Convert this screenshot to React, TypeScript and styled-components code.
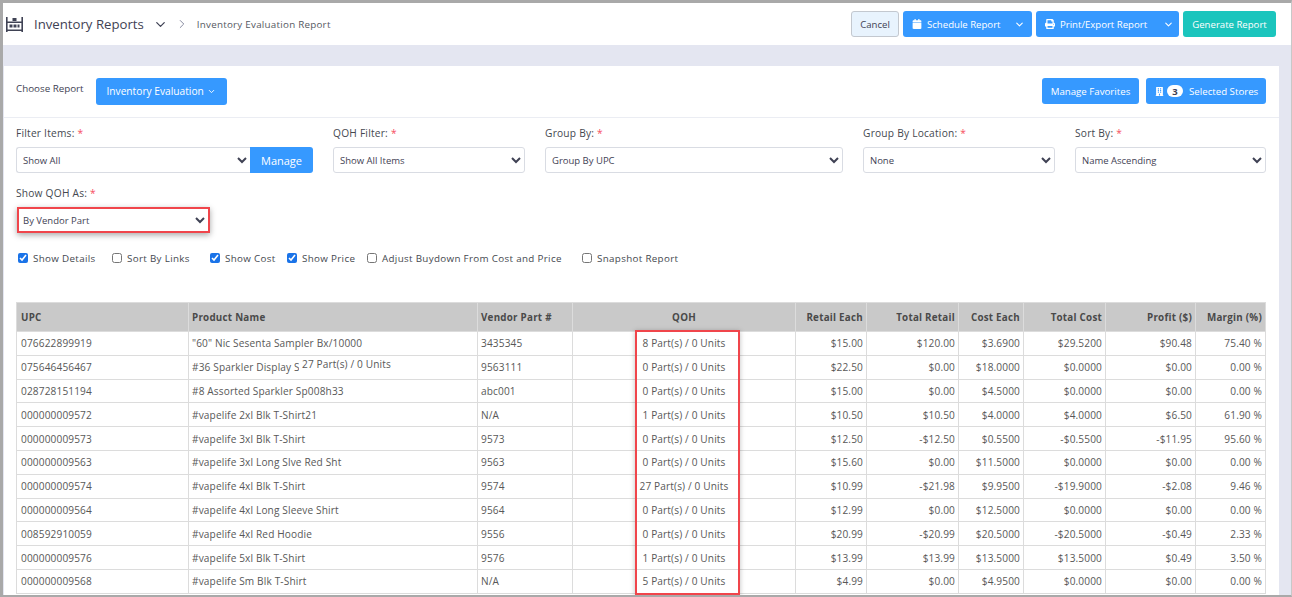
import React from 'react'
import styled, { createGlobalStyle } from 'styled-components'
import { ChevronDown, ChevronRight } from 'lucide-react'
import { FaBuilding, FaCalendar, FaPrint } from 'react-icons/fa'

const Global = createGlobalStyle`
  html, body {
    margin: 0;
    height: 100%;
    overflow: hidden;
    font-family: "Open Sans", "Liberation Sans", sans-serif;
  }
`

const Frame = styled.div`
  box-sizing: border-box;
  height: 597px;
  overflow: hidden;
  background: #e4e6f1;
  border-top: 3px solid #a9a9a9;
  border-left: 3px solid #a9a9a9;
  border-bottom: 2px solid #a9a9a9;
  border-right: 1px solid #c8c8c8;
`
const Header = styled.header`
  display: flex;
  align-items: center;
  height: 42px;
  padding: 0 15px 0 3px;
  background: #fff;
  color: #3f4254;
`
const Title = styled.span`
  margin-left: 11px;
  font-size: 13.2px;
  color: #3f4254;
`
const Crumb = styled.span`
  margin-left: 8px;
  font-size: 9.8px;
  letter-spacing: 0.25px;
  color: #55585f;
`
const HeaderActions = styled.div`
  display: flex;
  gap: 4px;
  margin-left: auto;
`
const Button = styled.button<{ $h?: number }>`
  display: inline-flex;
  align-items: center;
  height: ${p => p.$h ?? 26}px;
  padding: 0 10px;
  border: 0;
  border-radius: 3px;
  background: #3699ff;
  color: #fff;
  font: 9.6px "Open Sans", sans-serif;
  white-space: nowrap;
`
const CancelButton = styled(Button)`
  width: 48px;
  justify-content: center;
  padding: 0;
  background: #e8f3fd;
  border: 1px solid #c3c8cf;
  color: #3f4254;
`
const GenerateButton = styled(Button)`
  width: 93px;
  justify-content: center;
  padding: 0;
  background: #1bc5bd;
`
const SplitButton = styled(Button)<{ $w: number; $caret: number }>`
  width: ${p => p.$w}px;
  padding: 0 0 0 9px;
  gap: 5px;
  & > svg:last-child {
    margin-left: auto;
    margin-right: ${p => p.$caret}px;
  }
`
const Card = styled.main`
  margin: 21px 12px 0 1px;
  height: 600px;
  background: #fff;
`
const CardTop = styled.div`
  display: flex;
  align-items: center;
  height: 51px;
  padding: 0 13px 0 12px;
  border-bottom: 1px solid #ebedf3;
  font-size: 9.8px;
  color: #3f4254;
`
const ChooseLabel = styled.span`
  margin: -6px 12px 0 0;
`
const ChooseButton = styled(Button)`
  width: 131px;
  justify-content: center;
  gap: 3px;
  height: 27px;
  padding: 0;
  margin-top: -1px;
  font-size: 10.2px;
`
const TopActions = styled.div`
  display: flex;
  gap: 7px;
  margin-left: auto;
  margin-top: -1px;
`
const FavoritesButton = styled(Button)`
  width: 97px;
  justify-content: center;
  padding: 0;
  font-size: 9.7px;
`
const StoresButton = styled(Button)`
  width: 120px;
  padding: 0 0 0 9px;
  font-size: 9.7px;
`
const Badge = styled.span`
  display: inline-flex;
  align-items: center;
  justify-content: center;
  width: 16px;
  height: 12px;
  margin: 0 6px 0 3px;
  border-radius: 6px;
  background: #fff;
  color: #3f4254;
  font-size: 9.5px;
  font-weight: 700;
`
const FilterRow = styled.div<{ $top?: number }>`
  display: flex;
  gap: 20px;
  padding: ${p => p.$top ?? 8}px 13px 0 12px;
`
const Field = styled.div<{ $w: number }>`
  width: ${p => p.$w}px;
  flex: none;
`
const Label = styled.label`
  display: block;
  height: 21px;
  font-size: 10.2px;
  line-height: 15px;
  letter-spacing: 0.22px;
  color: #45484f;
  &::after {
    content: ' *';
    color: #f64e60;
  }
`
const Select = styled.select`
  display: block;
  box-sizing: border-box;
  width: 100%;
  height: 26px;
  padding: 0 2px;
  border: 1px solid #d9dce3;
  border-radius: 3px;
  background-color: #fff;
  color: #3f4254;
  font: 9.5px "Open Sans", sans-serif;
`
const InputGroup = styled.div`
  display: flex;
  ${Select} {
    flex: 1;
    border-right: 0;
    border-radius: 3px 0 0 3px;
  }
`
const ManageButton = styled(Button)`
  flex: none;
  width: 63px;
  justify-content: center;
  padding: 0;
  border-radius: 0 3px 3px 0;
  font-size: 11px;
`
const HighlightBox = styled.div`
  margin-left: 1px;
  width: 193px;
  border: 2px solid #f0454b;
  box-sizing: border-box;
  box-shadow: 0 2px 6px rgba(0, 0, 0, 0.35);
  ${Select} {
    height: 22px;
    padding: 0;
    border: 0;
    border-radius: 0;
  }
`
const ChecksRow = styled.div`
  display: flex;
  align-items: center;
  height: 14px;
  padding: 18px 0 0 14px;
`
const Check = styled.label<{ $w: number }>`
  display: flex;
  align-items: center;
  flex: none;
  gap: 5px;
  width: ${p => p.$w}px;
  font-size: 9.8px;
  letter-spacing: 0.33px;
  color: #45484f;
  input {
    width: 10px;
    height: 10px;
    margin: 0;
    accent-color: #1a73e8;
  }
`
const TableWrap = styled.div`
  position: relative;
  margin: 37px 13px 0 12px;
`
const Table = styled.table`
  width: 1249px;
  table-layout: fixed;
  border-collapse: collapse;
  font-size: 10.1px;
  letter-spacing: 0.14px;
  color: #585858;
  th, td {
    border: 1px solid #dcdcdc;
    padding: 0 3px 0 4px;
    overflow: hidden;
    white-space: nowrap;
  }
  th:not(:first-child), td:not(:first-child) {
    padding-left: 3px;
  }
  th {
    height: 28px;
    background: #c9c9c9;
    color: #4a4a4a;
    font-size: 9.8px;
    font-weight: 700;
    letter-spacing: 0.25px;
    text-align: left;
  }
  td {
    height: 22.8px;
  }
`
const RightTh = styled.th`
  && {
    text-align: right;
  }
`
const CenterTh = styled.th`
  && {
    text-align: center;
  }
`
const RightTd = styled.td`
  text-align: right;
`
const CenterTd = styled.td`
  text-align: center;
`
const QohBox = styled.div`
  position: absolute;
  left: 619px;
  top: 28px;
  width: 105px;
  height: 265px;
  box-sizing: border-box;
  border: 2px solid #f0454b;
  box-shadow: 0 1px 5px rgba(0, 0, 0, 0.25);
`
const FloatingQoh = styled.div`
  position: absolute;
  left: 283px;
  top: 55px;
  padding: 0 3px;
  background: #fff;
  font-size: 10.1px;
  line-height: 15px;
  letter-spacing: 0.14px;
  color: #585858;
`

const widths = [172, 289, 95, 223, 71, 92, 65, 82, 90, 70]

const rows = [
  ['076622899919', '"60" Nic Sesenta Sampler Bx/10000', '3435345', '8 Part(s) / 0 Units', '$15.00', '$120.00', '$3.6900', '$29.5200', '$90.48', '75.40 %'],
  ['075646456467', '#36 Sparkler Display Set', '9563111', '0 Part(s) / 0 Units', '$22.50', '$0.00', '$18.0000', '$0.0000', '$0.00', '0.00 %'],
  ['028728151194', '#8 Assorted Sparkler Sp008h33', 'abc001', '0 Part(s) / 0 Units', '$15.00', '$0.00', '$4.5000', '$0.0000', '$0.00', '0.00 %'],
  ['000000009572', '#vapelife 2xl Blk T-Shirt21', 'N/A', '1 Part(s) / 0 Units', '$10.50', '$10.50', '$4.0000', '$4.0000', '$6.50', '61.90 %'],
  ['000000009573', '#vapelife 3xl Blk T-Shirt', '9573', '0 Part(s) / 0 Units', '$12.50', '-$12.50', '$0.5500', '-$0.5500', '-$11.95', '95.60 %'],
  ['000000009563', '#vapelife 3xl Long Slve Red Sht', '9563', '0 Part(s) / 0 Units', '$15.60', '$0.00', '$11.5000', '$0.0000', '$0.00', '0.00 %'],
  ['000000009574', '#vapelife 4xl Blk T-Shirt', '9574', '27 Part(s) / 0 Units', '$10.99', '-$21.98', '$9.9500', '-$19.9000', '-$2.08', '9.46 %'],
  ['000000009564', '#vapelife 4xl Long Sleeve Shirt', '9564', '0 Part(s) / 0 Units', '$12.99', '$0.00', '$12.5000', '$0.0000', '$0.00', '0.00 %'],
  ['008592910059', '#vapelife 4xl Red Hoodie', '9556', '0 Part(s) / 0 Units', '$20.99', '-$20.99', '$20.5000', '-$20.5000', '-$0.49', '2.33 %'],
  ['000000009576', '#vapelife 5xl Blk T-Shirt', '9576', '1 Part(s) / 0 Units', '$13.99', '$13.99', '$13.5000', '$13.5000', '$0.49', '3.50 %'],
  ['000000009568', '#vapelife Sm Blk T-Shirt', 'N/A', '5 Part(s) / 0 Units', '$4.99', '$0.00', '$4.9500', '$0.0000', '$0.00', '0.00 %'],
]

function WarehouseIcon() {
  return (
    <svg width="17" height="15" viewBox="0 0 17 15" fill="#3f4254">
      <path d="M0 0h1.6v15H0zM15.4 0H17v15h-1.6zM1.6 12.6h13.8V14H1.6zM1.6 4.5h13.8v1.4H1.6z" />
      <path d="M3.5 7.5h3v3h-3zM7.5 7.5h3v3h-3zM11.5 7.5h2v3h-2zM6.5 1h4v3h-4z" />
    </svg>
  )
}

export default function App() {
  return (
    <Frame>
      <Global />
      <Header>
        <WarehouseIcon />
        <Title>Inventory Reports</Title>
        <ChevronDown size={15} strokeWidth={2} style={{ marginLeft: 9 }} />
        <ChevronRight size={14} strokeWidth={1.6} color="#7e8299" style={{ marginLeft: 7 }} />
        <Crumb>Inventory Evaluation Report</Crumb>
        <HeaderActions>
          <CancelButton>Cancel</CancelButton>
          <SplitButton $w={129} $caret={7}>
            <FaCalendar size={10} />
            <span>Schedule Report</span>
            <ChevronDown size={11} strokeWidth={2.4} />
          </SplitButton>
          <SplitButton $w={143} $caret={5}>
            <FaPrint size={10} />
            <span>Print/Export Report</span>
            <ChevronDown size={11} strokeWidth={2.4} />
          </SplitButton>
          <GenerateButton>Generate Report</GenerateButton>
        </HeaderActions>
      </Header>
      <Card>
        <CardTop>
          <ChooseLabel>Choose Report</ChooseLabel>
          <ChooseButton>
            Inventory Evaluation
            <ChevronDown size={9} strokeWidth={2.4} />
          </ChooseButton>
          <TopActions>
            <FavoritesButton>Manage Favorites</FavoritesButton>
            <StoresButton>
              <FaBuilding size={9} />
              <Badge>3</Badge>
              Selected Stores
            </StoresButton>
          </TopActions>
        </CardTop>
        <FilterRow>
          <Field $w={297}>
            <Label>Filter Items:</Label>
            <InputGroup>
              <Select><option>Show All</option></Select>
              <ManageButton>Manage</ManageButton>
            </InputGroup>
          </Field>
          <Field $w={192}>
            <Label>QOH Filter:</Label>
            <Select><option>Show All Items</option></Select>
          </Field>
          <Field $w={298}>
            <Label>Group By:</Label>
            <Select><option>Group By UPC</option></Select>
          </Field>
          <Field $w={192}>
            <Label>Group By Location:</Label>
            <Select><option>None</option></Select>
          </Field>
          <Field $w={191}>
            <Label>Sort By:</Label>
            <Select><option>Name Ascending</option></Select>
          </Field>
        </FilterRow>
        <FilterRow $top={13}>
          <Field $w={297}>
            <Label>Show QOH As:</Label>
            <HighlightBox>
              <Select><option>By Vendor Part</option></Select>
            </HighlightBox>
          </Field>
        </FilterRow>
        <ChecksRow>
          <Check $w={94}><input type="checkbox" defaultChecked />Show Details</Check>
          <Check $w={98}><input type="checkbox" />Sort By Links</Check>
          <Check $w={77}><input type="checkbox" defaultChecked />Show Cost</Check>
          <Check $w={80}><input type="checkbox" defaultChecked />Show Price</Check>
          <Check $w={215}><input type="checkbox" />Adjust Buydown From Cost and Price</Check>
          <Check $w={110}><input type="checkbox" />Snapshot Report</Check>
        </ChecksRow>
        <TableWrap>
          <Table>
            <colgroup>
              {widths.map((w, i) => <col key={i} style={{ width: w }} />)}
            </colgroup>
            <thead>
              <tr>
                <th>UPC</th>
                <th>Product Name</th>
                <th>Vendor Part #</th>
                <CenterTh>QOH</CenterTh>
                <RightTh>Retail Each</RightTh>
                <RightTh>Total Retail</RightTh>
                <RightTh>Cost Each</RightTh>
                <RightTh>Total Cost</RightTh>
                <RightTh>Profit ($)</RightTh>
                <RightTh>Margin (%)</RightTh>
              </tr>
            </thead>
            <tbody>
              {rows.map(r => (
                <tr key={r[0]}>
                  <td>{r[0]}</td>
                  <td>{r[1]}</td>
                  <td>{r[2]}</td>
                  <CenterTd>{r[3]}</CenterTd>
                  {r.slice(4).map((v, i) => <RightTd key={i}>{v}</RightTd>)}
                </tr>
              ))}
            </tbody>
          </Table>
          <QohBox />
          <FloatingQoh>27 Part(s) / 0 Units</FloatingQoh>
        </TableWrap>
      </Card>
    </Frame>
  )
}
